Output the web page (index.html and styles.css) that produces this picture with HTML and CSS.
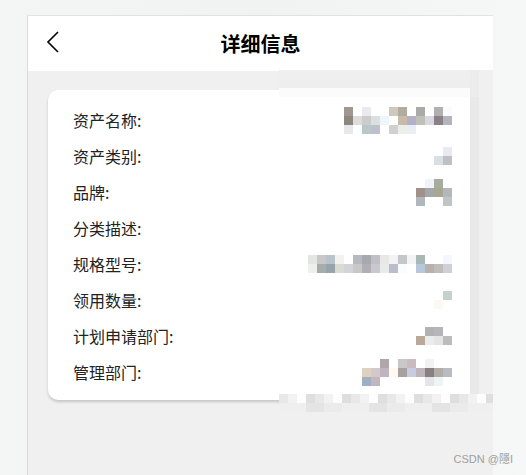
FILE: index.html
```html
<!DOCTYPE html>
<html lang="zh-CN">
  <head>
    <meta charset="UTF-8" />
    <meta name="viewport" content="width=device-width, initial-scale=1.0" />
    <title>详细信息</title>
    <link rel="stylesheet" href="styles.css">
  </head>

  <body>
    <div class="frame">
      <div class="header">
        <svg class="back" width="14" height="22" viewBox="0 0 14 22">
          <polyline points="12,1 2,11 12,21" fill="none" stroke="#000" stroke-width="1.6" />
        </svg>
        <h1 class="title">详细信息</h1>
      </div>

      <div class="card">
        <div class="row"><span class="label">资产名称:</span><div class="mosaic" data-key="name"></div></div>
        <div class="row"><span class="label">资产类别:</span><div class="mosaic" data-key="type"></div></div>
        <div class="row"><span class="label">品牌:</span><div class="mosaic" data-key="brand"></div></div>
        <div class="row"><span class="label">分类描述:</span><div class="mosaic" data-key="desc"></div></div>
        <div class="row"><span class="label">规格型号:</span><div class="mosaic" data-key="model"></div></div>
        <div class="row"><span class="label">领用数量:</span><div class="mosaic" data-key="count"></div></div>
        <div class="row"><span class="label">计划申请部门:</span><div class="mosaic" data-key="plan"></div></div>
        <div class="row"><span class="label">管理部门:</span><div class="mosaic" data-key="dept"></div></div>
      </div>
    </div>

    <!-- pixelated patch that hides the right half of the screenshot -->
    <div class="censor">
      <div class="censor-top"></div>
      <div class="censor-middle">
        <div class="censor-edge"></div>
      </div>
      <div class="censor-bottom"></div>
    </div>

    <p class="watermark">CSDN @隱I</p>

    <script>
      // values are blurred in the original, so we draw them as pixel blocks
      const pixels = {
        name: [
          ["#a09890", "", "#ebebef", "", "", "#d0c8bc", "#b0aca0", "", "#a8aca8", "", "#b0b0b0", "#f8fbff"],
          ["#8c8880", "#dddddd", "#cccccc", "#d8e0e0", "#eef6fa", "#ffffff", "#c8bca8", "#b4b0c8", "#c0c0b8", "#d8d8e0", "#8c8088", "#b4b4bc"],
          ["#e8e8ec", "", "#b8c8c8", "#c0c0cc", "", "#d0d0d0", "#eceee8", "#e8eef4", "", "", "", ""],
        ],
        type: [
          ["", "#e8eaf0"],
          ["#d8e0e4", "#c0c0c4"],
        ],
        brand: [
          ["", "#f0f4f8", "#a8aca0", ""],
          ["#a09088", "#a0a8ac", "#a8a890", "#b4b8bc"],
          ["#b0b8bc", "", "", "#c0c4c4"],
        ],
        desc: [],
        model: [
          ["#e4e6e4", "#c8c8c8", "#b8c4cc", "#f4f2ee", "", "#b8b8c0", "#a8a8b0", "#c0c0c4", "#e8e8e4", "#f4f2f6", "#c4c8c8", "#f4f2f6", "#a8b8b4", "", "", "#f4f8fc"],
          ["#eef0ee", "#a4acac", "#98a4ac", "#d8dcd4", "#d4d4d8", "#c8c8c8", "#b0b0b4", "#c8c8d0", "#e8eaec", "#bcbccc", "#fafcfe", "", "#b8c8dc", "#b8b0ac", "#c0bcbc", "#d0d0d4"],
        ],
        count: [
          ["", "#c8d0cc"],
          ["#fcf8f4", ""],
        ],
        plan: [
          ["", "#b4b0b4", "#b8b4bc", ""],
          ["#bca898", "#e8ecea", "#e4e4e4", "#bcbcbc"],
        ],
        dept: [
          ["", "", "#b0a8a8", "", "#c8c8c8", "#c8bcc0", "", "#f0f2f6", "", ""],
          ["#e0d0c0", "#d4c8c8", "#c0b4c0", "#fffaf0", "#a8a0a0", "#c8cce0", "#c0b4bc", "#888080", "#b0aca8", "#b8bcc0"],
          ["#a0b0c4", "#c0b8bc", "", "", "", "", "", "#e4e4ea", "#eef4f4", ""],
        ],
      };

      document.querySelectorAll(".mosaic").forEach((box) => {
        for (const line of pixels[box.dataset.key]) {
          const row = document.createElement("div");
          row.className = "mosaic-line";
          for (const color of line) {
            const cell = document.createElement("span");
            cell.className = "px";
            if (color) cell.style.background = color;
            row.appendChild(cell);
          }
          box.appendChild(row);
        }
      });
    </script>
  </body>
</html>
```

FILE: styles.css
```css
body {
  margin: 0;
  height: 475px;
  overflow: hidden;
  position: relative;
  background: linear-gradient(90deg, #f4f5f5 0%, #f1f2f2 50%, #f6f7f7 100%);
  font-family: "Noto Sans CJK SC", "Noto Sans", sans-serif;
}

.frame {
  margin: 15px 0 0 27px;
  width: 465px;
  height: 460px;
  border-left: 1px solid #dcdcdc;
  border-top: 1px solid #e2e2e2;
  background-color: #f0f0f0;
}

.header {
  height: 55px;
  display: flex;
  align-items: center;
  justify-content: center;
  position: relative;
  background-color: #fff;
}

.back {
  position: absolute;
  left: 18px;
  top: 15px;
}

.title {
  margin: 0;
  font-size: 20px;
  font-weight: 700;
  color: #000;
}

.card {
  margin: 19px 20px 0;
  padding: 12px 21px 10px 25px;
  background-color: #fff;
  border-radius: 10px;
  box-shadow: 0 2px 3px rgba(0, 0, 0, 0.18);
}

.row {
  height: 36px;
  display: flex;
  align-items: center;
  justify-content: space-between;
}

.label {
  font-size: 16px;
  color: #222;
}

.mosaic {
  display: flex;
  flex-direction: column;
}

.mosaic-line {
  display: flex;
  justify-content: flex-end;
}

.px {
  width: 9px;
  height: 9px;
}

.censor {
  position: absolute;
  left: 279px;
  top: 70px;
  width: 214px;
  display: flex;
  flex-direction: column;
  pointer-events: none;
}

.censor-top {
  height: 27px;
  background:
    linear-gradient(90deg, transparent 0 191px, #ececec 191px 200px, #f0f0f0 200px),
    linear-gradient(#efefef 0 9px, #eeeeee 9px 18px, #fbfbfb 18px 27px);
}

.censor-middle {
  height: 297px;
  display: flex;
  justify-content: flex-end;
}

.censor-edge {
  width: 23px;
  background: linear-gradient(90deg, #e9e9e9 0 9px, #f0f0f0 9px);
}

.censor-bottom {
  height: 18px;
  background:
    repeating-linear-gradient(90deg, #e8e8e8 0 9px, #f2f2f2 9px 18px, #fdfdfd 18px 27px, #dedede 27px 36px) 0 0 / 100% 9px no-repeat,
    repeating-linear-gradient(90deg, #efefef 0 27px, #e4e4e4 27px 45px, #ebebeb 45px 63px) 0 9px / 100% 9px no-repeat;
}

.watermark {
  position: absolute;
  right: 13px;
  bottom: 0;
  margin: 0 0 9px;
  font-family: "Liberation Sans", sans-serif;
  font-size: 11px;
  color: #a0a0a0;
}
```
